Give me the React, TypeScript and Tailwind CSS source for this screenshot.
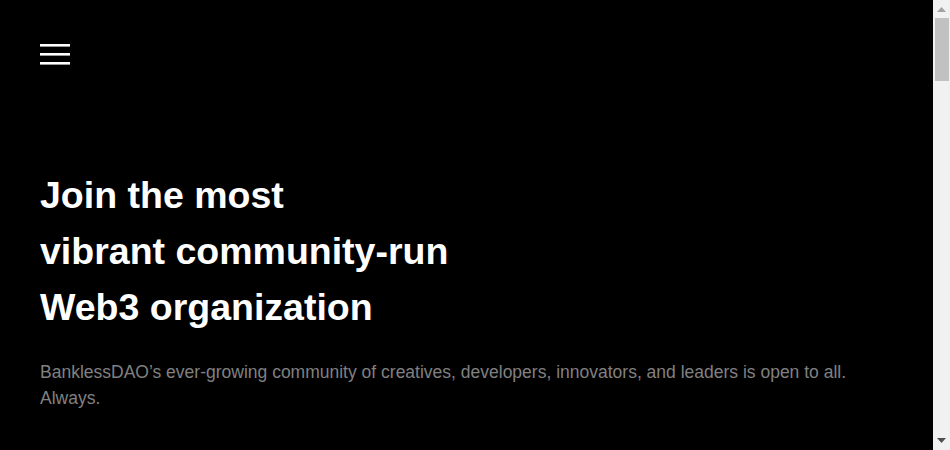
function Scrollbar() {
    return (
        <div className="w-[17px] shrink-0 h-screen bg-[#f1f1f1] flex flex-col items-center">
            <svg viewBox="0 0 9 5" className="w-[9px] h-[5px] mt-[7px]">
                <path d="M0 5 L4.5 0 L9 5 Z" fill="#a3a3a3" />
            </svg>
            <div className="mt-[6px] w-[14px] h-[63px] bg-[#c1c1c1]" />
            <div className="flex-1" />
            <svg viewBox="0 0 9 5" className="w-[9px] h-[5px] mb-[7px]">
                <path d="M0 0 L9 0 L4.5 5 Z" fill="#505050" />
            </svg>
        </div>
    );
}

export default function App() {
    return (
        <div className="h-screen overflow-hidden flex bg-black text-white font-['Liberation_Sans',Arial,sans-serif]">
            <main className="flex-1 min-w-0 min-h-[2970px]">
                <header className="px-10 pt-[44px] h-[100px]">
                    <button type="button" className="block w-[30px] h-[22px]" aria-label="menu">
                        <svg viewBox="0 0 30 22" className="w-[30px] h-[22px]">
                            <rect x="0" y="0" width="30" height="2.6" fill="#fff" />
                            <rect x="0" y="9" width="30" height="2.6" fill="#fff" />
                            <rect x="0" y="18" width="30" height="2.6" fill="#fff" />
                        </svg>
                    </button>
                </header>
                <section className="px-10 pt-[67px]">
                    <h1 className="text-[37.5px] leading-[56px] font-bold">
                        Join the most
                        <br />
                        vibrant community-run
                        <br />
                        Web3 organization
                    </h1>
                    <p className="mt-6 text-[17.5px] leading-[26px] text-[#808080]">
                        BanklessDAO’s ever-growing community of creatives, developers, innovators, and leaders is open to all. Always.
                    </p>
                </section>
            </main>
            <Scrollbar />
        </div>
    );
}
